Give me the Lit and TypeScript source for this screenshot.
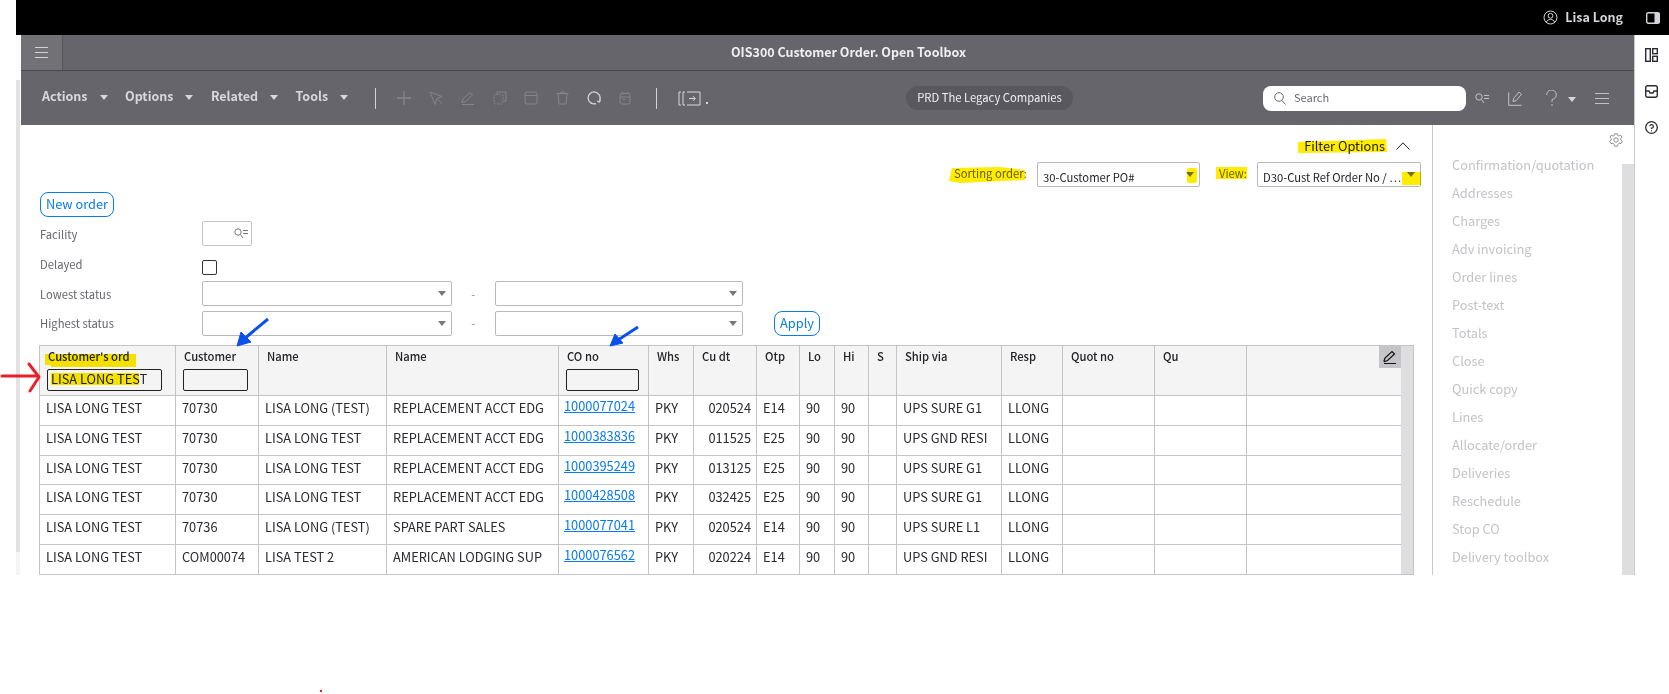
import { LitElement, html, css, svg } from "lit";
import { customElement } from "lit/decorators.js";

type Row = string[];
const ROWS: Row[] = [
  ["LISA LONG TEST","70730","LISA LONG (TEST)","REPLACEMENT ACCT EDG","1000077024","PKY","020524","E14","90","90","","UPS SURE G1","LLONG","","",""],
  ["LISA LONG TEST","70730","LISA LONG TEST","REPLACEMENT ACCT EDG","1000383836","PKY","011525","E25","90","90","","UPS GND RESI","LLONG","","",""],
  ["LISA LONG TEST","70730","LISA LONG TEST","REPLACEMENT ACCT EDG","1000395249","PKY","013125","E25","90","90","","UPS SURE G1","LLONG","","",""],
  ["LISA LONG TEST","70730","LISA LONG TEST","REPLACEMENT ACCT EDG","1000428508","PKY","032425","E25","90","90","","UPS SURE G1","LLONG","","",""],
  ["LISA LONG TEST","70736","LISA LONG (TEST)","SPARE PART SALES","1000077041","PKY","020524","E14","90","90","","UPS SURE L1","LLONG","","",""],
  ["LISA LONG TEST","COM00074","LISA TEST 2","AMERICAN LODGING SUP","1000076562","PKY","020224","E14","90","90","","UPS GND RESI","LLONG","","",""],
];
const HEAD = ["Customer's ord","Customer","Name","Name","CO no","Whs","Cu dt","Otp","Lo","Hi","S","Ship via","Resp","Quot no","Qu",""];
const SIDE = ["Confirmation/quotation","Addresses","Charges","Adv invoicing","Order lines","Post-text","Totals","Close","Quick copy","Lines","Allocate/order","Deliveries","Reschedule","Stop CO","Delivery toolbox"];

const ico = (w: number, h: number, body: unknown) => html`<svg class="ico" width=${w} height=${h} viewBox="0 0 ${w} ${h}" fill="none" stroke="currentColor" stroke-width="1">${body}</svg>`;
const burger = (w: number) => ico(w, 13, svg`<path d="M0 1.5H${w}M0 6.5H${w}M0 11.5H${w}"/>`);

@customElement("app-root")
export class AppRoot extends LitElement {
  static styles = css`
    :host { display: block; position: relative; width: 1669px; height: 694px; overflow: hidden; background: #fff; color: #1f1f24;
      font-family: "Noto Sans CJK SC", "Noto Sans", sans-serif; font-size: 12.8px; line-height: 18px; }
    .ico { display: block; flex: none; }
    .top { margin-left: 16px; height: 35px; background: #000; color: #d6d6da; display: flex; align-items: center; justify-content: flex-end; padding-right: 9px; font-weight: 700; font-size: 12.5px; }
    .top .name { margin: 0 23px 0 7px; padding-bottom: 2px; }
    .main { display: flex; height: 540px; }
    .strip { margin-left: 16px; width: 5px; display: flex; flex-direction: column; }
    .strip i { display: block; width: 4px; background: #f4f4f4; }
    .strip .a { height: 45px; background: #fbfbfb; }
    .strip .b { height: 472px; background: #e2e2e2; }
    .strip .c { flex: 1; }
    .work { width: 1613px; display: flex; flex-direction: column; }
    .rail { flex: 1; border-left: 1px solid #c9c9cc; display: flex; flex-direction: column; align-items: center; padding-top: 13px; gap: 23px; color: #2b2b30; padding-right: 1px; }
    .title { height: 35px; background: #66656b; border-bottom: 1px solid #49494f; display: flex; color: #fff; }
    .menu-btn { width: 41px; background: #717176; border-right: 1px solid #55555a; display: flex; align-items: center; justify-content: center; color: #d4d4d8; }
    .title .t { flex: 1; text-align: center; font-weight: 700; font-size: 12.5px; line-height: 33px; color: #f0f0f2; }
    .bar { height: 54px; background: #66656b; display: flex; align-items: center; padding-left: 21px; color: #85858a; white-space: nowrap; }
    .menus { width: 333px; display: flex; flex: none; }
    .m { display: flex; align-items: center; color: #d8d8dc; font-weight: 700; font-size: 12.5px; margin-right: 17.5px; padding-bottom: 4px; }
    .caret { width: 0; height: 0; border-left: 4.5px solid transparent; border-right: 4.5px solid transparent; border-top: 5px solid currentColor; margin-left: 12px; margin-top: 3px; }
    .sep { width: 1px; height: 21px; background: #d4d4d8; flex: none; }
    .sep.s1 { margin-right: 21px; }
    .sep.s2 { margin: 0 21px 0 25px; }
    .tools { display: flex; justify-content: space-between; width: 234px; flex: none; }
    .on { color: #d8d8dc; }
    .dot { width: 2px; height: 2px; background: #d8d8dc; margin: 10px 0 0 5px; }
    .pill { margin-left: 198px; width: 167px; height: 24px; border-radius: 12px; background: #59585f; color: #f0f0f2; font-size: 11.25px; line-height: 22px; text-align: center; white-space: nowrap; flex: none; }
    .search { margin-left: 190px; width: 203px; height: 25px; background: #fff; border-radius: 8px; display: flex; align-items: center; padding-left: 11px; box-sizing: border-box; color: #6a6a70; font-size: 11px; gap: 8px; flex: none; }
    .search span { padding-bottom: 2px; }
    .ri { color: #c2c2c6; }
    .ml9 { margin-left: 9px; } .ml19 { margin-left: 19px; } .ml24 { margin-left: 24px; }
    .bar .cw { color: #d8d8dc; margin-left: 11px; }
    .content { flex: 1; display: flex; min-height: 0; }
    .pane { width: 1411px; display: flex; flex-direction: column; }
    .filter { display: flex; justify-content: flex-end; align-items: center; padding-right: 22px; margin-top: 11px; height: 20px; color: #1f1f24; gap: 11px; font-size: 12.8px; }
    .sort { display: flex; justify-content: flex-end; padding-right: 11px; margin-top: 6px; height: 25px; align-items: flex-start; color: #66666c; font-size: 11.25px; }
    .sort label { line-height: 22px; margin-right: 10px; white-space: nowrap; }
    .sel { box-sizing: border-box; height: 25px; border: 1px solid #b9b9bd; border-radius: 2px; background: #fff; display: flex; align-items: center; justify-content: space-between; padding: 0 5px; color: #1f1f24; font-size: 11.25px; flex: none; white-space: nowrap; }
    .sel .v { padding-top: 4px; }
    .sel .tri { width: 0; height: 0; border-left: 4px solid transparent; border-right: 4px solid transparent; border-top: 5px solid #77777c; flex: none; }
    .s1w { width: 163px; margin-right: 19px; }
    .s2w { width: 164px; }
    .btn { box-sizing: border-box; height: 25px; border: 1px solid #0a7bf0; border-radius: 8px; color: #0a7bf0; background: #fff; font-size: 12.8px; line-height: 22px; text-align: center; }
    .new { width: 74px; margin: 5px 0 4px 19px; }
    .frow { display: flex; margin-left: 19px; align-items: center; color: #66666c; font-size: 11.25px; }
    .frow > label { width: 162px; }
    .lk { box-sizing: border-box; width: 50px; height: 25px; border: 1px solid #c4c4c8; border-radius: 2px; display: flex; align-items: center; justify-content: flex-end; padding-right: 3px; color: #77777c; }
    .r1 { height: 25px; } .r1 > label { padding-top: 1px; }
    .r2 { height: 35px; } .r2 > label { padding-top: 1px; }
    .r3 { height: 25px; margin-bottom: 4px; }
    .r4 { height: 26px; }
    .chk { box-sizing: border-box; width: 15px; height: 15px; border: 1px solid #333; border-radius: 2px; margin-top: 8px; }
    .w250 { width: 250px; } .w248 { width: 248.5px; }
    .dash { width: 42.5px; text-align: center; color: #8a8a90; }
    .apply { width: 46px; margin-left: 31px; }
    .grid { margin: 9px 0 0 18px; width: 1375px; height: 230px; box-sizing: border-box; border: 1px solid #c4c4c8; display: flex; position: relative; }
    .tb { width: 1361px; }
    .row { display: grid; grid-template-columns: 136px 83px 128px 172px 90px 45px 63px 43px 35px 34px 28px 105px 61px 92px 92px 154px; height: 30px; box-sizing: border-box; border-bottom: 1px solid #c4c4c8; }
    .row.short { height: 29px; }
    .row.hd { height: 50px; background: #f4f4f5; }
    .row > div { border-right: 1px solid #c4c4c8; padding: 3px 0 0 6px; white-space: nowrap; overflow: hidden; font-size: 12.8px; line-height: 18px; color: #2a2a2f; min-width: 0; }
    .row.hd > div { padding: 1px 0 0 8px; font-size: 11.25px; font-weight: 500; color: #222227; position: relative; }
    .row > div:last-child { border-right: 0; }
    .row a { color: #0a7bf0; text-decoration: underline; display: block; margin-top: -2px; margin-left: -1px; }
    .row .dt { text-align: right; padding: 3px 5px 0 0; }
    .fin { box-sizing: border-box; height: 22px; margin: 4px 0 0 -1px; border: 1px solid #222; border-radius: 2px; font-weight: 400; font-size: 12.8px; line-height: 18px; padding-left: 3px; }
    .f0 { width: 115px; } .f1 { width: 65px; } .f4 { width: 73px; }
    .edit { position: absolute; right: 0; top: 0; width: 22px; height: 22px; background: #c5c5c9; display: flex; align-items: center; justify-content: center; color: #111; }
    .vs { width: 12px; background: #dedee0; flex: none; }
    .panel { flex: 1; border-left: 1px solid #c9c9cc; display: flex; flex-direction: column; overflow: hidden; }
    .gear { display: flex; justify-content: flex-end; padding: 8px 11px 0 0; color: #8e8e93; height: 18px; flex: none; }
    .pb { flex: 1; display: flex; }
    .list { flex: 1; padding: 0 0 0 19px; min-height: 0; }
    .list div { height: 28px; line-height: 28px; color: #c3c3c7; font-size: 12.8px; white-space: nowrap; }
    .psb { width: 12px; margin-top: 13px; background: #dedee0; flex: none; }
    .ink { position: absolute; inset: 0; pointer-events: none; }
    .hl { fill: #ffec00; mix-blend-mode: multiply; }
  `;

  render() {
    return html`
      <div class="top">
        ${ico(15, 15, svg`<circle cx="7.5" cy="7.5" r="6.5"/><circle cx="7.5" cy="5.8" r="2.4"/><path d="M3.3 12.2c1-2.2 2.6-2.8 4.2-2.8s3.2.6 4.2 2.8"/>`)}
        <span class="name">Lisa Long</span>
        ${ico(14, 12, svg`<rect x=".7" y=".7" width="12.6" height="10.6" rx="1.5" stroke-width="1.4"/><rect x="8.5" y="1" width="5" height="10" fill="currentColor" stroke="none"/>`)}
      </div>
      <div class="main">
        <div class="strip"><i class="a"></i><i class="b"></i><i class="c"></i></div>
        <div class="work">
          <div class="title">
            <div class="menu-btn">${burger(13)}</div>
            <div class="t">OIS300 Customer Order. Open Toolbox</div>
          </div>
          <div class="bar">
            <div class="menus">
              <div class="m">Actions<span class="caret"></span></div>
              <div class="m">Options<span class="caret"></span></div>
              <div class="m">Related<span class="caret"></span></div>
              <div class="m">Tools<span class="caret"></span></div>
            </div>
            <span class="sep s1"></span>
            <div class="tools">
              ${ico(14, 14, svg`<path d="M7 0V14M0 7H14" stroke-width="1.3"/>`)}
              ${ico(14, 14, svg`<path d="M1 1 13 5.5 8 7.5 6 13.5ZM8 7.5 13 13"/>`)}
              ${ico(14, 14, svg`<path d="M1 11 2 8 9 1.5 11.5 4 4.5 10.5 1 11.5ZM1 13.5H13"/>`)}
              ${ico(14, 14, svg`<rect x="1" y="3.5" width="9" height="9.5" rx="1.5" stroke-dasharray="2 1.2"/><path d="M4 3V1H13V10H10.5"/>`)}
              ${ico(14, 14, svg`<rect x="1" y="1" width="12" height="12" rx="2"/><path d="M1 4.5H13"/>`)}
              ${ico(13, 14, svg`<path d="M.5 2.5H12.5M2 3 3 13H10L11 3M4 2 5 1H8L9 2"/>`)}
              <span class="on">${ico(14, 14, svg`<path d="M9 12.6A6 6 0 1 1 12.5 9.5M13.5 8.5 12.5 11 10 10" stroke-width="1.3"/>`)}</span>
              ${ico(12, 14, svg`<rect x="1" y="2.5" width="10" height="10.5" rx="2"/><path d="M1 6H11M3.5 1V3M8.5 1V3M3.5 8.5H6.5"/>`)}
            </div>
            <span class="sep s2"></span>
            <span class="on">${ico(23, 15, svg`<path d="M3 1H1V14H3M7 1H5V14H7M9 1H22V14H9M11 7.5H17M15 5.2 17.3 7.5 15 9.8"/>`)}</span>
            <span class="dot"></span>
            <div class="pill">PRD The Legacy Companies</div>
            <div class="search">${ico(12, 13, svg`<circle cx="5" cy="5" r="4.3"/><path d="M8 8.5 11.5 12.5"/>`)}<span>Search</span></div>
            <span class="ri ml9">${ico(14, 11, svg`<circle cx="4" cy="4" r="3.2"/><path d="M6.5 6.5 9 10M9 2.5H14M9 5.5H14"/>`)}</span>
            <span class="ri ml19">${ico(14, 15, svg`<path d="M.7 1.5V14.3H13.5M5 10.5 5.5 7.5 11 1 13.5 3.2 8 9.8Z"/>`)}</span>
            <span class="ri ml24">${ico(11, 16, svg`<path d="M.7 5A4.8 4.8 0 1 1 6 9.5V12M6 14V16"/>`)}</span>
            <span class="caret cw"></span>
            <span class="ri ml19">${burger(14)}</span>
          </div>
          <div class="content">
            <div class="pane">
              <div class="filter"><span>Filter Options</span>${ico(14, 8, svg`<path d="M.5 7.5 7 .8 13.5 7.5"/>`)}</div>
              <div class="sort">
                <label>Sorting order:</label>
                <div class="sel s1w"><span class="v">30-Customer PO#</span><span class="tri"></span></div>
                <label>View:</label>
                <div class="sel s2w"><span class="v">D30-Cust Ref Order No / …</span><span class="tri"></span></div>
              </div>
              <div class="btn new">New order</div>
              <div class="frow r1"><label>Facility</label><div class="lk">${ico(14, 11, svg`<circle cx="4" cy="4" r="3.2"/><path d="M6.5 6.5 9 10M9 2.5H14M9 5.5H14"/>`)}</div></div>
              <div class="frow r2"><label>Delayed</label><div class="chk"></div></div>
              <div class="frow r3"><label>Lowest status</label><div class="sel w250"><span></span><span class="tri"></span></div><span class="dash">-</span><div class="sel w248"><span></span><span class="tri"></span></div></div>
              <div class="frow r4"><label>Highest status</label><div class="sel w250"><span></span><span class="tri"></span></div><span class="dash">-</span><div class="sel w248"><span></span><span class="tri"></span></div><div class="btn apply">Apply</div></div>
              <div class="grid">
                <div class="tb">
                  <div class="row hd">
                    ${HEAD.map((h, i) => html`<div>${h}
                      ${i === 0 ? html`<div class="fin f0">LISA LONG TEST</div>` : ""}
                      ${i === 1 ? html`<div class="fin f1"></div>` : ""}
                      ${i === 4 ? html`<div class="fin f4"></div>` : ""}
                      ${i === 15 ? html`<div class="edit">${ico(14, 14, svg`<path d="M1 11 2 8 9 1.5 11.5 4 4.5 10.5 1.5 11.5ZM1 13.5H13" stroke-width="1.2"/>`)}</div>` : ""}
                    </div>`)}
                  </div>
                  ${ROWS.map((r, ri) => html`<div class="row ${ri === 2 ? "short" : ""}">
                    ${r.map((c, i) => i === 4 ? html`<div><a>${c}</a></div>` : html`<div class=${i === 6 ? "dt" : ""}>${c}</div>`)}
                  </div>`)}
                </div>
                <div class="vs"></div>
              </div>
            </div>
            <div class="panel">
              <div class="gear">${ico(14, 14, svg`<circle cx="7" cy="7" r="2.2"/><path d="M5.8.7H8.2L8.6 2.4 10 3 11.6 2.2 13 4.2 11.8 5.4V7L13.3 8.4 12 10.6 10.2 10.2 8.8 11.5 8.2 13.3H5.8L5.2 11.5 3.9 10.3 2 10.6.7 8.5 2.2 7V5.5L1 4.2 2.4 2.2 4 3 5.4 2.4Z"/>`)}</div>
              <div class="pb">
                <div class="list">${SIDE.map((s) => html`<div>${s}</div>`)}</div>
                <div class="psb"></div>
              </div>
            </div>
          </div>
        </div>
        <div class="rail">
          ${ico(13, 14, svg`<rect x=".7" y=".7" width="4.6" height="12.6" stroke-width="1.4"/><rect x="7.7" y=".7" width="4.6" height="5" stroke-width="1.4"/><rect x="7.7" y="8.3" width="4.6" height="5" stroke-width="1.4"/>`)}
          ${ico(13, 13, svg`<rect x=".7" y=".7" width="11.6" height="11.6" rx="2" stroke-width="1.4"/><path d="M.7 6H4L5 8H8L9 6H12.3" stroke-width="1.4"/>`)}
          ${ico(13, 13, svg`<circle cx="6.5" cy="6.5" r="5.8" stroke-width="1.3"/><path d="M4.8 5.2A1.8 1.8 0 1 1 6.5 7.2V8M6.5 9.2V10.2" stroke-width="1.2"/>`)}
        </div>
      </div>
      <svg class="ink" width="1669" height="694" viewBox="0 0 1669 694">
        <path class="hl" d="M1298 142 1386 139 1387 152 1298 153Z"/>
        <path class="hl" d="M952 168 1000 167 1025 170 1025 180 960 183 949 181Z"/>
        <rect class="hl" x="1187" y="168" width="10" height="15" rx="2"/>
        <rect class="hl" x="1216" y="167" width="31" height="12"/>
        <rect class="hl" x="1402" y="172" width="19" height="13"/>
        <path class="hl" d="M45 354H136V367H51V365H45Z"/>
        <rect class="hl" x="51" y="373" width="88" height="12"/>
        <g fill="none" stroke="#e8202a" stroke-width="3" stroke-linecap="round" stroke-linejoin="round">
          <path d="M2 376H37"/><path d="M29 364 39 377 30 391"/>
        </g>
        <g fill="#0b50e8" stroke="#0b50e8">
          <path d="M268 319 244 339" stroke-width="3" fill="none"/>
          <path d="M237 346 241 332 251 342Z"/>
          <path d="M638 327 618 340" stroke-width="3" fill="none"/>
          <path d="M610 346 615 334 623 343Z"/>
        </g>
        <circle cx="321" cy="691" r="1.2" fill="#e8202a"/>
      </svg>
    `;
  }
}
